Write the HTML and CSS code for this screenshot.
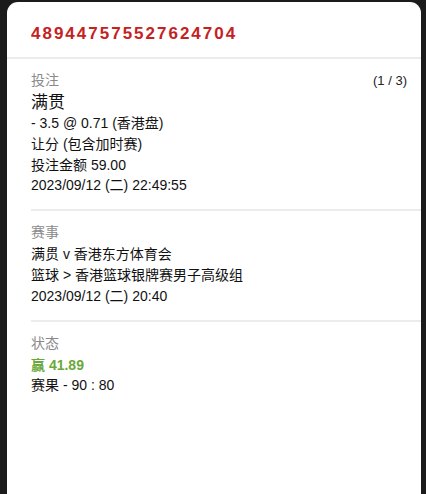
FILE: index.html
```html
<!DOCTYPE html>
<html lang="zh">
<head>
  <meta charset="UTF-8">
  <title>投注详情</title>
  <link rel="stylesheet" href="styles.css">
</head>
<body>
  <div class="card">
    <div class="card-head">
      <span class="ticket-no">489447575527624704</span>
    </div>

    <!-- Bet section -->
    <div class="section">
      <div class="label-row">
        <span class="label">投注</span>
        <span class="pager">(1 / 3)</span>
      </div>
      <div class="pick">满贯</div>
      <div class="row">- 3.5 @ 0.71 (香港盘)</div>
      <div class="row">让分 (包含加时赛)</div>
      <div class="row">投注金额 59.00</div>
      <div class="row">2023/09/12 (二) 22:49:55</div>
    </div>

    <!-- Match section -->
    <div class="section">
      <div class="label-row">
        <span class="label">赛事</span>
      </div>
      <div class="row">满贯 v 香港东方体育会</div>
      <div class="row">篮球 &gt; 香港篮球银牌赛男子高级组</div>
      <div class="row">2023/09/12 (二) 20:40</div>
    </div>

    <!-- Status section -->
    <div class="section last">
      <div class="label-row">
        <span class="label">状态</span>
      </div>
      <div class="row win">赢 41.89</div>
      <div class="row">赛果 - 90 : 80</div>
    </div>
  </div>
</body>
</html>
```

FILE: styles.css
```css
html, body {
  height: 100%;
}

body {
  margin: 0;
  background: #1b1b1b;
  font-family: "Liberation Sans", Arial, "Noto Sans CJK SC", sans-serif;
  color: #111;
  overflow: hidden;
}

.card {
  box-sizing: border-box;
  margin: 2px 5px 0 7px;
  min-height: calc(100% - 2px);
  background: #ffffff;
  border-radius: 11px 11px 0 0;
}

.card-head {
  padding: 21px 16px 12px 24px;
  border-bottom: 2px solid #ececec;
}

.ticket-no {
  font-size: 17px;
  line-height: 22px;
  font-weight: bold;
  letter-spacing: 2px;
  color: #c4221f;
}

.section {
  margin-left: 24px;
  padding: 10px 14px 13px 0;
  border-bottom: 2px solid #ececec;
}

.section.last {
  border-bottom: none;
}

.label-row {
  display: flex;
  justify-content: space-between;
  align-items: center;
  line-height: 23px;
}

.label {
  font-size: 14px;
  color: #8a8a8a;
}

.pager {
  font-size: 13px;
  color: #222;
}

.pick {
  font-size: 17px;
  line-height: 21px;
}

.row {
  font-size: 14px;
  line-height: 20.8px;
}

.row.win {
  font-weight: bold;
  color: #6aa83a;
}
```
